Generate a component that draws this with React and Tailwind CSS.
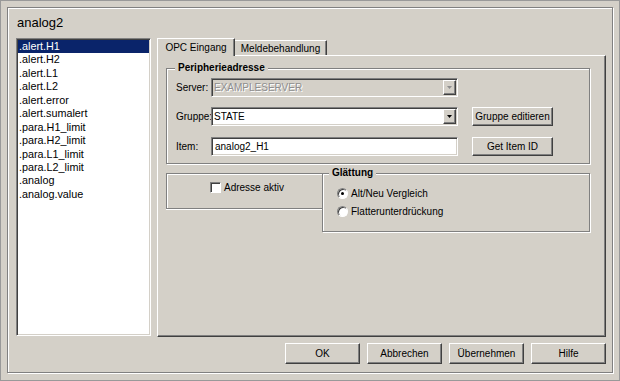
const raised = 'border border-t-white border-l-white border-r-[#404040] border-b-[#404040] shadow-[inset_-1px_-1px_0_#808080]'
const sunken = 'border border-t-[#808080] border-l-[#808080] border-r-white border-b-white shadow-[inset_1px_1px_0_#404040,inset_-1px_-1px_0_#d4d0c8]'

const items = [
  '.alert.H1', '.alert.H2', '.alert.L1', '.alert.L2', '.alert.error', '.alert.sumalert',
  '.para.H1_limit', '.para.H2_limit', '.para.L1_limit', '.para.L2_limit', '.analog', '.analog.value',
]

function Button({ children, className = '' }) {
  return (
    <button className={`${raised} flex items-center justify-center bg-[#d4d0c8] text-[10px] text-black ${className}`}>
      {children}
    </button>
  )
}

function Combo({ value, disabled }) {
  return (
    <div className={`${sunken} flex w-[247px] h-[19px] p-px ${disabled ? 'bg-[#d4d0c8]' : 'bg-white'}`}>
      <span className={`flex-1 pl-[1px] leading-[15px] ${disabled ? 'text-[#8e8e8e] [text-shadow:1px_1px_0_#fff]' : 'text-black'}`}>
        {value}
      </span>
      <div className={`${raised} w-[13px] h-full flex items-center justify-center bg-[#d4d0c8]`}>
        <svg width="5" height="3" viewBox="0 0 5 3">
          <path d="M0 0h5L2.5 3z" fill={disabled ? '#8e8e8e' : '#000'} />
        </svg>
      </div>
    </div>
  )
}

function Legend({ children }) {
  return (
    <span className="-mt-[8px] self-start px-[3px] bg-[#d4d0c8] font-bold leading-[14px] text-black">
      {children}
    </span>
  )
}

function Radio({ checked, label, className = '' }) {
  return (
    <div className={`flex items-center h-[13px] ${className}`}>
      <div className="w-[11px] h-[11px] rounded-full bg-white border border-t-[#808080] border-l-[#808080] border-r-white border-b-white shadow-[inset_1px_1px_0_#404040] flex items-center justify-center">
        {checked && <div className="w-[3px] h-[3px] rounded-full bg-black" />}
      </div>
      <span className="ml-[3px] leading-[13px]">{label}</span>
    </div>
  )
}

export default function App() {
  return (
    <div className="w-[620px] h-[381px] border border-[#999999] bg-[#d4d0c8] pt-[6px] pl-[6px] pr-[6px] pb-[7px] font-['Liberation_Sans',Arial,sans-serif] text-[10px] text-black">
      <div className="h-full border border-[#808080] shadow-[1px_1px_0_#fff,inset_1px_1px_0_#fff] flex flex-col pl-[8px] pr-[6px]">
        {/* Title */}
        <div className="h-[30px] pt-[7px] pl-[1px] text-[13px] leading-[15px]">analog2</div>

        <div className="flex gap-[6px] h-[299px]">
          {/* List */}
          <div className={`${sunken} w-[135px] h-[298px] bg-white p-px text-[10.8px]`}>
            {items.map((it, i) => (
              <div
                key={it}
                className={`pl-[1px] leading-[13.45px] h-[13.45px] ${i === 0 ? 'bg-[#0a246a] text-white' : ''}`}
              >
                {it}
              </div>
            ))}
          </div>

          {/* Tabs */}
          <div className="flex flex-col w-[449px]">
            <div className="flex items-end h-[17px]">
              <div className="relative z-10 -mb-px w-[78px] h-[18px] bg-[#d4d0c8] border-t border-l border-r border-t-white border-l-white border-r-[#404040] shadow-[inset_-1px_0_0_#808080] flex items-center justify-center pb-[1px]">
                OPC Eingang
              </div>
              <div className="w-[92px] h-[15px] border-t border-r border-t-white border-r-[#404040] shadow-[inset_-1px_0_0_#808080] flex items-center justify-center">
                Meldebehandlung
              </div>
            </div>

            <div className={`${raised} h-[282px] pt-[12px] pl-[8px] flex flex-col`}>
              {/* Peripherieadresse */}
              <div className="w-[424px] border border-[#808080] shadow-[1px_1px_0_#fff,inset_1px_1px_0_#fff] flex flex-col pl-[8px] pb-[7px]">
                <Legend>Peripherieadresse</Legend>
                <div className="flex items-center mt-[3px] pl-[1px]">
                  <span className="w-[35px]">Server:</span>
                  <Combo value="EXAMPLESERVER" disabled />
                </div>
                <div className="flex items-center mt-[10px] pl-[1px]">
                  <span className="w-[35px]">Gruppe:</span>
                  <Combo value="STATE" />
                  <Button className="ml-[14px] w-[81px] h-[19px]">Gruppe editieren</Button>
                </div>
                <div className="flex items-center mt-[11px] pl-[1px]">
                  <span className="w-[35px]">Item:</span>
                  <div className={`${sunken} w-[247px] h-[19px] bg-white pl-[3px] leading-[17px]`}>analog2_H1</div>
                  <Button className="ml-[14px] w-[81px] h-[19px]">Get Item ID</Button>
                </div>
              </div>

              <div className="flex items-start mt-[9px]">
                {/* Adresse aktiv */}
                <div className="w-[156px] h-[36px] border-t border-l border-b border-[#808080] shadow-[0_1px_0_#fff,inset_1px_1px_0_#fff] pl-[43px] pt-[8px] flex items-start">
                  <div className="flex items-center">
                    <div className="w-[11px] h-[11px] bg-white border border-t-[#808080] border-l-[#808080] border-r-white border-b-white shadow-[inset_1px_1px_0_#404040]" />
                    <span className="ml-[3px] leading-[11px]">Adresse aktiv</span>
                  </div>
                </div>

                {/* Glättung */}
                <div className="w-[268px] h-[59px] border border-[#808080] shadow-[1px_1px_0_#fff,inset_1px_1px_0_#fff] flex flex-col pl-[6px]">
                  <Legend>Glättung</Legend>
                  <Radio checked label="Alt/Neu Vergleich" className="mt-[7px] ml-[8px]" />
                  <Radio label="Flatterunterdrückung" className="mt-[5px] ml-[8px]" />
                </div>
              </div>
            </div>
          </div>
        </div>

        {/* Bottom buttons */}
        <div className="flex justify-end gap-[7px] mt-[6px]">
          <Button className="w-[75px] h-[21px]">OK</Button>
          <Button className="w-[75px] h-[21px]">Abbrechen</Button>
          <Button className="w-[75px] h-[21px]">Übernehmen</Button>
          <Button className="w-[75px] h-[21px]">Hilfe</Button>
        </div>
      </div>
    </div>
  )
}
